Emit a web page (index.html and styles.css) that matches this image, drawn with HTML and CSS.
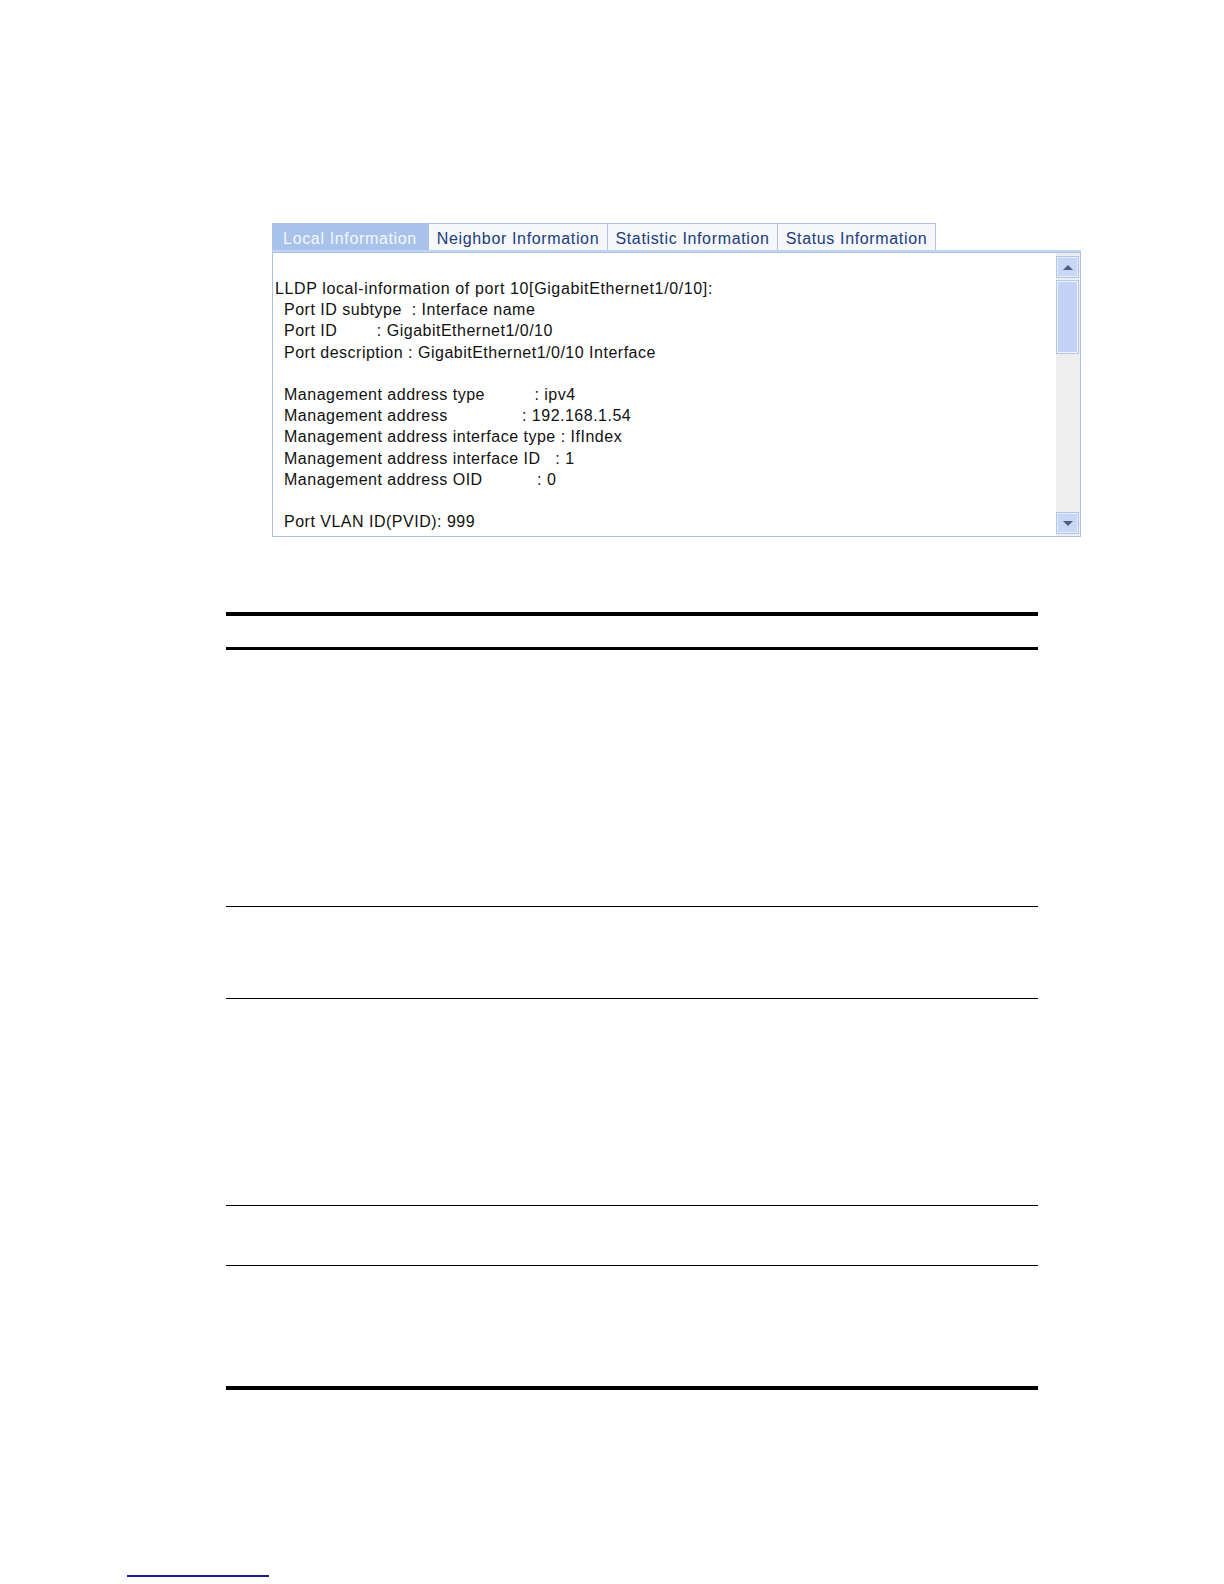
FILE: index.html
```html
<!DOCTYPE html>
<html>
<head>
<meta charset="utf-8">
<link rel="stylesheet" href="styles.css">
</head>
<body>
<div class="page">
  <div class="widget">
    <div class="tabs">
      <div class="tab active t1">Local Information</div>
      <div class="tab t2">Neighbor Information</div>
      <div class="tab t3">Statistic Information</div>
      <div class="tab t4">Status Information</div>
    </div>
    <div class="panel">
      <div class="content">
<div class="line first">LLDP local-information of port 10[GigabitEthernet1/0/10]:</div>
<div class="line">Port ID subtype  : Interface name</div>
<div class="line">Port ID        : GigabitEthernet1/0/10</div>
<div class="line">Port description : GigabitEthernet1/0/10 Interface</div>
<div class="line blank"> </div>
<div class="line">Management address type          : ipv4</div>
<div class="line">Management address               : 192.168.1.54</div>
<div class="line">Management address interface type : IfIndex</div>
<div class="line">Management address interface ID   : 1</div>
<div class="line">Management address OID           : 0</div>
<div class="line blank"> </div>
<div class="line">Port VLAN ID(PVID): 999</div>
      </div>
      <div class="scrollbar">
        <div class="sbtn"><span class="arrow up"></span></div>
        <div class="track"><div class="thumb"></div></div>
        <div class="sbtn"><span class="arrow down"></span></div>
      </div>
    </div>
  </div>

  <div class="rules">
    <div class="row r1"></div>
    <div class="row r2"></div>
    <div class="row r3"></div>
    <div class="row r4"></div>
    <div class="row r5"></div>
    <div class="row r6"></div>
  </div>

  <div class="footer-link"></div>
</div>
</body>
</html>
```

FILE: styles.css
```css
html, body {
  margin: 0;
  padding: 0;
  background: #ffffff;
}
.page {
  padding-top: 223px;
  font-family: "Liberation Sans", Arial, sans-serif;
}
.widget {
  margin-left: 272px;
  width: 809px;
}
.tabs {
  display: flex;
  height: 27px;
  border-bottom: 2px solid #c2d4f0;
}
.tab {
  box-sizing: border-box;
  height: 27px;
  padding-top: 3px;
  font-size: 16px;
  line-height: 24px;
  letter-spacing: 0.65px;
  color: #203c7c;
  background: #f6f7fa;
  border: 1px solid #aec3e6;
  border-left: none;
  border-bottom: none;
  text-align: center;
  white-space: nowrap;
}
.tab.active {
  background: #a8c2ea;
  color: #f4f8ff;
  border-color: #a8c2ea;
}
.t1 { width: 157px; }
.t2 { width: 179px; }
.t3 { width: 170px; }
.t4 { width: 158px; }
.panel {
  box-sizing: border-box;
  height: 285px;
  border: 1px solid #a9c1e8;
  display: flex;
  overflow: hidden;
}
.content {
  flex: 1;
  padding: 25px 0 0 2px;
  font-size: 16px;
  line-height: 21.2px;
  letter-spacing: 0.5px;
  color: #111111;
}
.line {
  white-space: pre;
  padding-left: 9px;
  height: 21.2px;
}
.line.first {
  padding-left: 0;
  letter-spacing: 0.62px;
}
.scrollbar {
  width: 24px;
  display: flex;
  flex-direction: column;
  background: #eeeeee;
  padding: 3px 1px 2px 0;
  box-sizing: border-box;
}
.sbtn {
  box-sizing: border-box;
  height: 22px;
  background: #c8d7f6;
  border: 1px solid #b3c6ee;
  box-shadow: inset 0 0 0 1px #e4ecfc;
  display: flex;
  align-items: center;
  justify-content: center;
}
.track {
  flex: 1;
  padding-top: 2px;
}
.thumb {
  box-sizing: border-box;
  height: 74px;
  background: #c3d3f7;
  border: 1px solid #b3c6ee;
  box-shadow: inset 0 0 0 1px #eef3fd;
}
.arrow {
  width: 0;
  height: 0;
  border-left: 5px solid transparent;
  border-right: 5px solid transparent;
}
.arrow.up {
  border-bottom: 5px solid #4d5e80;
}
.arrow.down {
  border-top: 5px solid #4d5e80;
}
.rules {
  margin-left: 226px;
  width: 812px;
  margin-top: 75px;
  border-top: 4px solid #000;
  border-bottom: 4px solid #000;
}
.row {
  border-bottom: 1px solid #000;
}
.r1 { height: 31px; border-bottom: 3px solid #000; }
.r2 { height: 256px; }
.r3 { height: 91px; }
.r4 { height: 206px; }
.r5 { height: 59px; }
.r6 { height: 120px; border-bottom: none; }
.footer-link {
  margin-left: 127px;
  margin-top: 185px;
  width: 142px;
  height: 2px;
  background: #1b1d8e;
}
```
